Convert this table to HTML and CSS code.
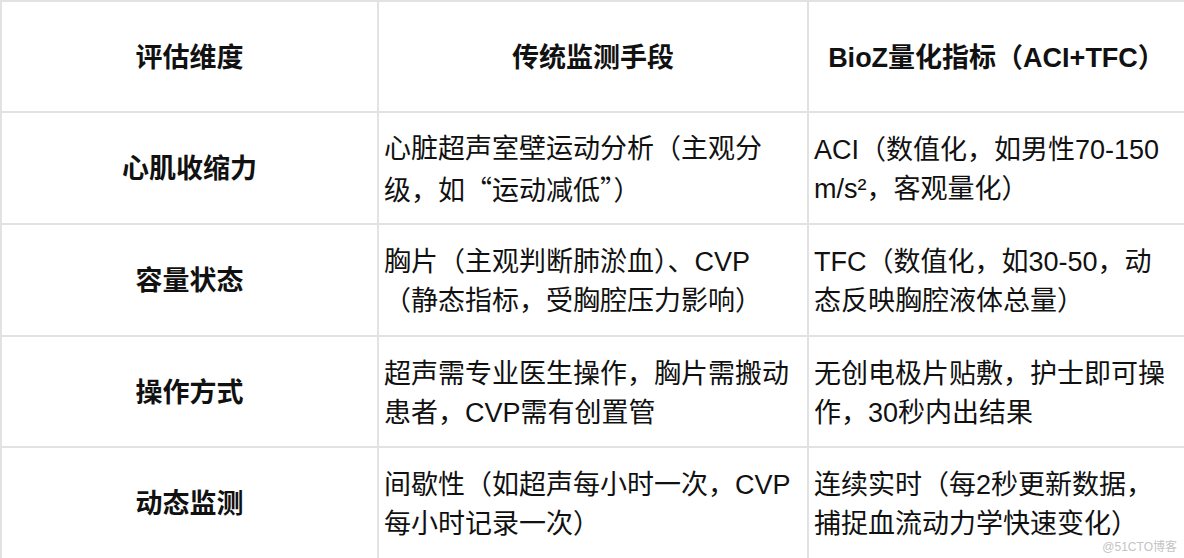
FILE: index.html
```html
<!DOCTYPE html>
<html lang="zh-CN">
<head>
<meta charset="utf-8">
<link rel="stylesheet" href="styles.css">
</head>
<body>
<div class="page">
<table class="grid">
  <colgroup>
    <col class="c1"><col class="c2"><col class="c3">
  </colgroup>
  <thead>
    <tr class="r-head">
      <th>评估维度</th>
      <th>传统监测手段</th>
      <th>BioZ量化指标（ACI+TFC）</th>
    </tr>
  </thead>
  <tbody>
    <tr class="r1">
      <th>心肌收缩力</th>
      <td>心脏超声室壁运动分析（主观分<br>级，如<span class="cjk">“</span>运动减低<span class="cjk">”</span>）</td>
      <td>ACI（数值化，如男性70-150<br>m/s²，客观量化）</td>
    </tr>
    <tr class="r2">
      <th>容量状态</th>
      <td>胸片（主观判断肺淤血）、CVP<br>（静态指标，受胸腔压力影响）</td>
      <td>TFC（数值化，如30-50，动<br>态反映胸腔液体总量）</td>
    </tr>
    <tr class="r3">
      <th>操作方式</th>
      <td>超声需专业医生操作，胸片需搬动<br>患者，CVP需有创置管</td>
      <td>无创电极片贴敷，护士即可操<br>作，30秒内出结果</td>
    </tr>
    <tr class="r4">
      <th>动态监测</th>
      <td>间歇性（如超声每小时一次，CVP<br>每小时记录一次）</td>
      <td>连续实时（每2秒更新数据，<br>捕捉血流动力学快速变化）</td>
    </tr>
  </tbody>
</table>
<div class="watermark">@51CTO博客</div>
</div>
</body>
</html>
```

FILE: styles.css
```css
html, body {
  margin: 0;
  padding: 0;
  background: #ffffff;
}
.page {
  position: relative;
  width: 1184px;
  height: 558px;
  overflow: hidden;
}
.grid {
  width: 1184px;
  border-collapse: collapse;
  table-layout: fixed;
  font-family: "Liberation Sans", "Noto Sans CJK SC", sans-serif;
  font-size: 27px;
  line-height: 39px;
  color: #111111;
}
.c1 { width: 377px; }
.c2 { width: 430px; }
.c3 { width: 377px; }
.grid th, .grid td {
  border: 2px solid #e2e2e2;
  vertical-align: middle;
  white-space: nowrap;
  overflow: hidden;
}
.grid th {
  font-weight: 700;
  text-align: center;
  padding: 3px 4px 0;
}
.grid td {
  font-weight: 400;
  text-align: left;
  padding: 4px 6px 0 5px;
}
.cjk {
  font-family: "Noto Sans CJK SC", sans-serif;
}
.r-head { height: 111px; }
.r1 { height: 112px; }
.r2 { height: 112px; }
.r3 { height: 111px; }
.r4 { height: 112px; }
.watermark {
  position: absolute;
  right: 7px;
  bottom: 4px;
  font-family: "Liberation Sans", "Noto Sans CJK SC", sans-serif;
  font-size: 12px;
  line-height: 14px;
  color: #c4c4c4;
}
```
